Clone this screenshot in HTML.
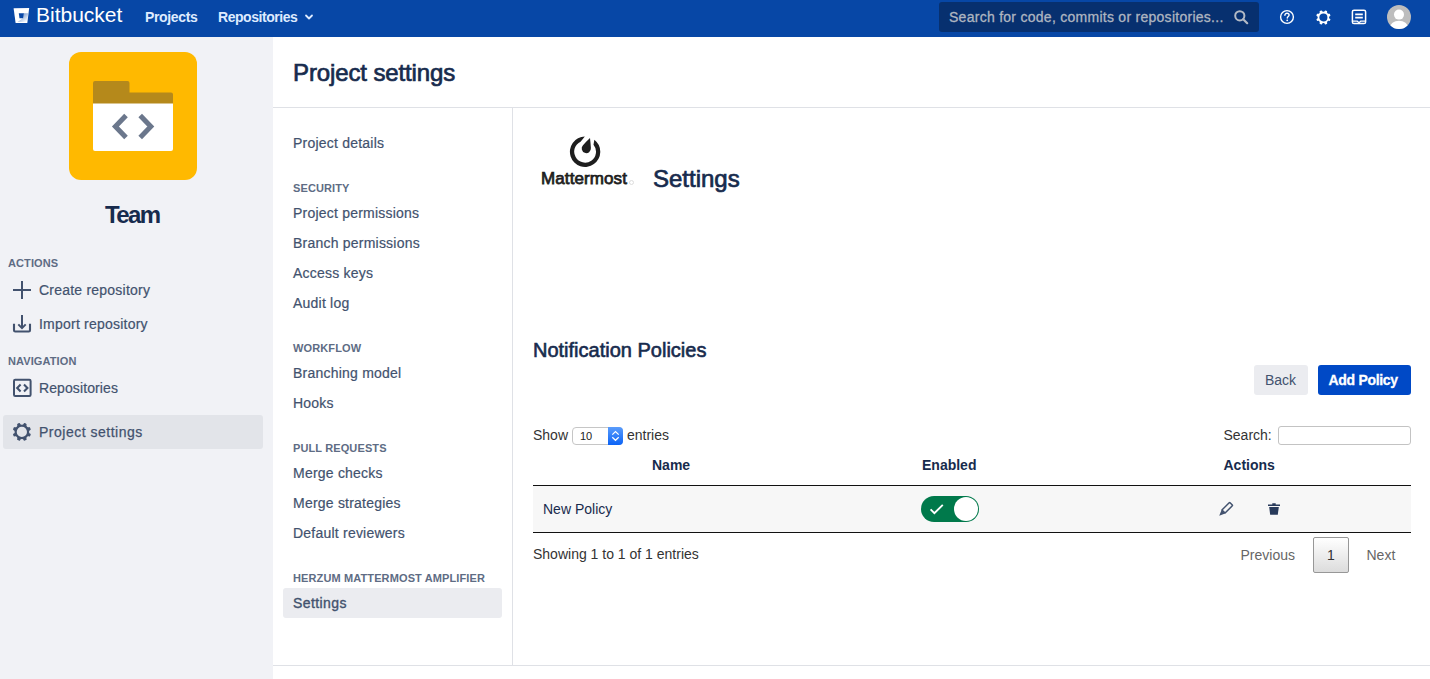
<!DOCTYPE html>
<html><head><meta charset="utf-8">
<style>
*{box-sizing:border-box;margin:0;padding:0}
html,body{width:1430px;height:679px;overflow:hidden;background:#fff;font-family:"Liberation Sans",sans-serif;}
.a{position:absolute}
.t{position:absolute;white-space:nowrap;line-height:1}
#hdr{left:0;top:0;width:1430px;height:37px;background:#0747A6}
#side{left:0;top:37px;width:273px;height:642px;background:#F1F2F6}
.nav-h{font-size:11px;font-weight:700;color:#5E6C84;letter-spacing:0.1px}
.nav-i{font-size:14px;color:#42526E;-webkit-text-stroke:0.2px #42526E}
.sn{font-size:14px;color:#42526E;left:293px;-webkit-text-stroke:0.2px #42526E}
.sh{font-size:11px;font-weight:700;color:#5E6C84;left:293px;letter-spacing:0.12px}
.dt{font-size:14px;color:#333}
.th{font-size:14px;font-weight:700;color:#172B4D}
</style></head><body>
<!-- header -->
<div id="hdr" class="a"></div>
<svg class="a" style="left:13px;top:7px" width="18" height="18" viewBox="0 0 18 18">
  <defs><linearGradient id="bg1" x1="0.2" y1="0.1" x2="0.9" y2="0.9"><stop offset="0" stop-color="#0747A6" stop-opacity="0.6"/><stop offset="1" stop-color="#0747A6" stop-opacity="0"/></linearGradient></defs>
  <path d="M0.6,1.3 L16.2,1.0 L14.3,16 L2.6,16 Z" fill="#fff"/>
  <path d="M10.3,6.3 L15.2,6.3 L14.1,15 L4.5,15 L9.8,11.2 Z" fill="url(#bg1)"/>
  <path d="M5.8,6.3 L10.8,6.3 L10.1,11.2 L6.5,11.2 Z" fill="#0747A6"/>
</svg>
<div class="t" style="left:36px;top:4px;font-size:21px;color:#fff;">Bitbucket</div>
<div class="t" style="left:145px;top:10.2px;font-size:14px;font-weight:700;color:#DEEBFF;letter-spacing:-0.35px">Projects</div>
<div class="t" style="left:218px;top:10.2px;font-size:14px;font-weight:700;color:#DEEBFF;letter-spacing:-0.45px">Repositories</div>
<svg class="a" style="left:303px;top:11px" width="12" height="12" viewBox="0 0 12 12"><path d="M3,4.5 L6,7.5 L9,4.5" stroke="#DEEBFF" stroke-width="1.8" fill="none" stroke-linecap="round" stroke-linejoin="round"/></svg>
<div class="a" style="left:939px;top:2px;width:320px;height:30px;background:#07306F;border-radius:3px"></div>
<div class="t" style="left:949px;top:10.2px;font-size:14px;color:#B3BAC5;letter-spacing:0.27px;-webkit-text-stroke:0.3px #A5ADBA">Search for code, commits or repositories...</div>
<svg class="a" style="left:1233px;top:9px" width="16" height="16" viewBox="0 0 16 16"><circle cx="6.8" cy="6.8" r="4.6" stroke="#B3BAC5" stroke-width="2" fill="none"/><path d="M10.2,10.2 L14.2,14.2" stroke="#B3BAC5" stroke-width="2.2" stroke-linecap="round"/></svg>
<svg class="a" style="left:1279px;top:9px" width="16" height="16" viewBox="0 0 16 16"><circle cx="8" cy="8" r="6.4" stroke="#fff" stroke-width="1.4" fill="none"/><path d="M5.9,6.3 C5.9,4.9 7,4.2 8,4.2 C9.2,4.2 10.1,5 10.1,6.1 C10.1,7.5 8.3,7.6 8.3,9.1" stroke="#fff" stroke-width="1.4" fill="none" stroke-linecap="round"/><circle cx="8.2" cy="11.3" r="0.9" fill="#fff"/></svg>
<svg class="a" style="left:1313.6px;top:7.6px" width="19.3" height="19.3" viewBox="0 0 24 24"><path fill="#fff" d="M11.701 16.7a5.002 5.002 0 1 1 0-10.003 5.002 5.002 0 0 1 0 10.004m8.368-3.117a1.995 1.995 0 0 1-1.346-1.885c0-.876.563-1.613 1.345-1.885a.48.48 0 0 0 .315-.574 8.947 8.947 0 0 0-.836-1.993.477.477 0 0 0-.598-.195 2.04 2.04 0 0 1-1.29.08 1.988 1.988 0 0 1-1.404-1.395 2.04 2.04 0 0 1 .076-1.297.478.478 0 0 0-.196-.6 8.98 8.98 0 0 0-1.975-.826.479.479 0 0 0-.574.314 1.995 1.995 0 0 1-1.885 1.346 1.994 1.994 0 0 1-1.884-1.345.482.482 0 0 0-.575-.315c-.708.2-1.379.485-2.004.842a.47.47 0 0 0-.198.582A2.002 2.002 0 0 1 4.445 7.06a.478.478 0 0 0-.595.196 8.946 8.946 0 0 0-.833 1.994.48.48 0 0 0 .308.572 1.995 1.995 0 0 1 1.323 1.877c0 .867-.552 1.599-1.324 1.877a.479.479 0 0 0-.308.57 8.99 8.99 0 0 0 .723 1.79.477.477 0 0 0 .624.194c.595-.273 1.343-.264 2.104.238.117.077.225.185.302.3.527.8.512 1.58.198 2.188a.473.473 0 0 0 .168.628 8.946 8.946 0 0 0 2.11.897.474.474 0 0 0 .57-.313 1.995 1.995 0 0 1 1.886-1.353c.878 0 1.618.567 1.887 1.353a.475.475 0 0 0 .57.313 8.964 8.964 0 0 0 2.084-.883.473.473 0 0 0 .167-.631c-.318-.608-.337-1.393.191-2.195.077-.116.185-.225.302-.302.772-.511 1.527-.513 2.125-.23a.477.477 0 0 0 .628-.19 8.925 8.925 0 0 0 .728-1.793.478.478 0 0 0-.314-.573"/></svg>
<svg class="a" style="left:1351px;top:9px" width="16" height="16" viewBox="0 0 16 16"><rect x="1.4" y="1.2" width="13.2" height="13.4" rx="1.6" stroke="#fff" stroke-width="1.5" fill="none"/><path d="M4.2,5.4 H11.8 M4.2,8.6 H11.8" stroke="#fff" stroke-width="1.7"/><path d="M1.5,12.2 H6.3 L8,13.6 L9.7,12.2 H14.5" stroke="#fff" stroke-width="1.2" fill="none"/></svg>
<svg class="a" style="left:1387px;top:5px" width="24" height="24" viewBox="0 0 24 24"><defs><clipPath id="avc"><circle cx="12" cy="12" r="12"/></clipPath></defs><circle cx="12" cy="12" r="12" fill="#BDBDBD"/><g clip-path="url(#avc)"><circle cx="12" cy="9.6" r="5" fill="#fff"/><path d="M2.5,24 C3,18.5 7,15.8 12,15.8 C17,15.8 21,18.5 21.5,24 Z" fill="#fff"/></g></svg>

<!-- left sidebar -->
<div id="side" class="a"></div>
<div class="a" style="left:69px;top:52px;width:128px;height:128px;background:#FFB900;border-radius:12px"></div>
<svg class="a" style="left:93px;top:80px" width="81" height="72" viewBox="0 0 81 72">
  <path d="M0,3 Q0,1 2,1 L34.5,1 Q36.5,1 36.5,3 L36.5,12.6 L78,12.6 Q80,12.6 80,14.6 L80,24 L0,24 Z" fill="#B5891B"/>
  <path d="M0,23.4 L80,23.4 L80,69 Q80,71 78,71 L2,71 Q0,71 0,69 Z" fill="#fff"/>
  <path d="M33,35.5 L22.4,46.5 L33,57.5" stroke="#6B778C" stroke-width="5" fill="none" stroke-linejoin="miter"/>
  <path d="M47.2,35.5 L57.8,46.5 L47.2,57.5" stroke="#6B778C" stroke-width="5" fill="none" stroke-linejoin="miter"/>
</svg>
<div class="t" style="left:105px;top:202.8px;font-size:24px;font-weight:700;color:#172B4D;letter-spacing:-1.6px">Team</div>

<div class="t nav-h" style="left:8px;top:257.7px">ACTIONS</div>
<svg class="a" style="left:12px;top:280px" width="20" height="20" viewBox="0 0 20 20"><path d="M10,1 V19 M1,10 H19" stroke="#42526E" stroke-width="2"/></svg>
<div class="t nav-i" style="left:39px;top:282.5px;letter-spacing:0.22px">Create repository</div>
<svg class="a" style="left:12px;top:314px" width="20" height="20" viewBox="0 0 20 20"><path d="M10,1 V14 M6.3,10.4 L10,14.1 L13.7,10.4" stroke="#42526E" stroke-width="2" fill="none"/><path d="M2,9.8 V16.3 Q2,17.5 3.2,17.5 H16.8 Q18,17.5 18,16.3 V9.8" stroke="#42526E" stroke-width="2.1" fill="none"/></svg>
<div class="t nav-i" style="left:39px;top:316.7px;letter-spacing:0.22px">Import repository</div>

<div class="t nav-h" style="left:8px;top:355.9px">NAVIGATION</div>
<svg class="a" style="left:12px;top:378px" width="20" height="20" viewBox="0 0 20 20"><rect x="2" y="1.8" width="16.6" height="16.2" rx="1.2" stroke="#42526E" stroke-width="2" fill="none"/><path d="M8.6,6.6 L5.2,10 L8.6,13.4 M12,6.6 L15.4,10 L12,13.4" stroke="#42526E" stroke-width="2.1" fill="none"/></svg>
<div class="t nav-i" style="left:39px;top:381.2px;letter-spacing:0.1px">Repositories</div>

<div class="a" style="left:3px;top:415px;width:260px;height:34px;background:#E2E4E9;border-radius:3px"></div>
<svg class="a" style="left:9.75px;top:419.6px" width="24.4" height="24.4" viewBox="0 0 24 24"><path fill="#42526E" d="M11.701 16.7a5.002 5.002 0 1 1 0-10.003 5.002 5.002 0 0 1 0 10.004m8.368-3.117a1.995 1.995 0 0 1-1.346-1.885c0-.876.563-1.613 1.345-1.885a.48.48 0 0 0 .315-.574 8.947 8.947 0 0 0-.836-1.993.477.477 0 0 0-.598-.195 2.04 2.04 0 0 1-1.29.08 1.988 1.988 0 0 1-1.404-1.395 2.04 2.04 0 0 1 .076-1.297.478.478 0 0 0-.196-.6 8.98 8.98 0 0 0-1.975-.826.479.479 0 0 0-.574.314 1.995 1.995 0 0 1-1.885 1.346 1.994 1.994 0 0 1-1.884-1.345.482.482 0 0 0-.575-.315c-.708.2-1.379.485-2.004.842a.47.47 0 0 0-.198.582A2.002 2.002 0 0 1 4.445 7.06a.478.478 0 0 0-.595.196 8.946 8.946 0 0 0-.833 1.994.48.48 0 0 0 .308.572 1.995 1.995 0 0 1 1.323 1.877c0 .867-.552 1.599-1.324 1.877a.479.479 0 0 0-.308.57 8.99 8.99 0 0 0 .723 1.79.477.477 0 0 0 .624.194c.595-.273 1.343-.264 2.104.238.117.077.225.185.302.3.527.8.512 1.58.198 2.188a.473.473 0 0 0 .168.628 8.946 8.946 0 0 0 2.11.897.474.474 0 0 0 .57-.313 1.995 1.995 0 0 1 1.886-1.353c.878 0 1.618.567 1.887 1.353a.475.475 0 0 0 .57.313 8.964 8.964 0 0 0 2.084-.883.473.473 0 0 0 .167-.631c-.318-.608-.337-1.393.191-2.195.077-.116.185-.225.302-.302.772-.511 1.527-.513 2.125-.23a.477.477 0 0 0 .628-.19 8.925 8.925 0 0 0 .728-1.793.478.478 0 0 0-.314-.573"/></svg>
<div class="t nav-i" style="left:39px;top:425.2px;letter-spacing:0.5px;-webkit-text-stroke:0.25px #42526E">Project settings</div>

<!-- main -->
<div class="t" style="left:293px;top:60.5px;font-size:24px;color:#172B4D;letter-spacing:-0.12px;-webkit-text-stroke:0.7px #172B4D">Project settings</div>
<div class="a" style="left:273px;top:107px;width:1157px;height:1px;background:#DFE1E6"></div>
<div class="a" style="left:512px;top:108px;width:1px;height:557px;background:#DFE1E6"></div>
<div class="a" style="left:273px;top:665px;width:1157px;height:1px;background:#DFE1E6"></div>

<div class="t sn" style="top:136.2px;letter-spacing:0.22px">Project details</div>
<div class="t sh" style="top:182.7px">SECURITY</div>
<div class="t sn" style="top:206.2px;letter-spacing:0.22px">Project permissions</div>
<div class="t sn" style="top:236.2px;letter-spacing:0.22px">Branch permissions</div>
<div class="t sn" style="top:266.2px;letter-spacing:0.22px">Access keys</div>
<div class="t sn" style="top:296.2px;letter-spacing:0.22px">Audit log</div>
<div class="t sh" style="top:342.7px">WORKFLOW</div>
<div class="t sn" style="top:366.2px;letter-spacing:0.22px">Branching model</div>
<div class="t sn" style="top:396.2px;letter-spacing:0.22px">Hooks</div>
<div class="t sh" style="top:442.7px">PULL REQUESTS</div>
<div class="t sn" style="top:466.2px;letter-spacing:0.22px">Merge checks</div>
<div class="t sn" style="top:496.2px;letter-spacing:0.22px">Merge strategies</div>
<div class="t sn" style="top:526.2px;letter-spacing:0.22px">Default reviewers</div>
<div class="t sh" style="top:572.7px">HERZUM MATTERMOST AMPLIFIER</div>
<div class="a" style="left:283px;top:588px;width:219px;height:30px;background:#EBECF0;border-radius:3px"></div>
<div class="t sn" style="top:596.2px;letter-spacing:0.4px;-webkit-text-stroke:0.35px #42526E">Settings</div>

<!-- content -->
<svg class="a" style="left:568px;top:135px" width="34" height="34" viewBox="0 0 34 34">
  <path d="M16.84,1.5 A15.2,15.2 0 1 0 26.35,4.64 L25.49,9.74 A10.9,10.9 0 1 1 12.58,6.78 Z" fill="#1E1E1E"/>
  <path d="M22,3 Q22.6,8 22.88,13.1 A4.6,4.6 0 1 1 14.98,10.32 Q18.2,6.5 22,3 Z" fill="#1E1E1E"/>
</svg>
<div class="t" style="left:541px;top:170.3px;font-size:17px;color:#1E1E1E;letter-spacing:0.1px;-webkit-text-stroke:0.75px #1E1E1E">Mattermost</div>
<div class="a" style="left:629px;top:180px;width:5px;height:5px;border:1px solid #DDD;border-radius:50%"></div>
<div class="t" style="left:653px;top:166.6px;font-size:24px;color:#172B4D;-webkit-text-stroke:0.7px #172B4D">Settings</div>

<div class="t" style="left:533px;top:340px;font-size:20px;color:#172B4D;-webkit-text-stroke:0.6px #172B4D">Notification Policies</div>
<div class="a" style="left:1254px;top:365px;width:54px;height:30px;background:#EBECF0;border-radius:3px"></div>
<div class="t" style="left:1265px;top:373.2px;font-size:14px;color:#42526E">Back</div>
<div class="a" style="left:1318px;top:365px;width:93px;height:30px;background:#0049C6;border-radius:3px"></div>
<div class="t" style="left:1328.5px;top:373.2px;font-size:14px;font-weight:700;color:#fff;letter-spacing:-0.3px;-webkit-text-stroke:0.3px #fff">Add Policy</div>

<div class="t dt" style="left:533px;top:427.7px">Show</div>
<div class="a" style="left:572px;top:427px;width:51px;height:18px;border:1px solid #C6C6C6;border-radius:4px;background:#fff"></div>
<div class="a" style="left:608px;top:427px;width:15px;height:18px;background:linear-gradient(#5A9CFB,#0B63F6);border-radius:0 4px 4px 0"></div>
<svg class="a" style="left:608px;top:427px" width="15" height="18" viewBox="0 0 15 18"><path d="M4.3,7.6 L7.5,4.5 L10.7,7.6 M4.3,10.2 L7.5,13.3 L10.7,10.2" stroke="#fff" stroke-width="1.2" fill="none"/></svg>
<div class="t" style="left:580px;top:430.5px;font-size:11px;color:#222">10</div>
<div class="t dt" style="left:627px;top:427.7px">entries</div>

<div class="t dt" style="left:1223.5px;top:428.2px">Search:</div>
<div class="a" style="left:1278px;top:426px;width:133px;height:19px;border:1px solid #C3C3C3;border-radius:3px;background:#fff"></div>

<div class="t th" style="left:652px;top:458.2px">Name</div>
<div class="t th" style="left:922px;top:458.2px">Enabled</div>
<div class="t th" style="left:1223.5px;top:458.2px">Actions</div>
<div class="a" style="left:533px;top:485px;width:878px;height:1px;background:#111"></div>
<div class="a" style="left:533px;top:486px;width:878px;height:46px;background:#F7F7F7"></div>
<div class="a" style="left:533px;top:532px;width:878px;height:1px;background:#111"></div>
<div class="t" style="left:543px;top:502.2px;font-size:14px;color:#172B4D">New Policy</div>

<div class="a" style="left:921px;top:496px;width:58px;height:26px;background:#00794B;border-radius:13px"></div>
<div class="a" style="left:954px;top:497px;width:24px;height:24px;background:#fff;border-radius:50%"></div>
<svg class="a" style="left:928px;top:501px" width="18" height="16" viewBox="0 0 18 16"><path d="M2.6,8.4 L6.4,12.1 L14.8,3.9" stroke="#fff" stroke-width="1.9" fill="none"/></svg>

<svg class="a" style="left:1217px;top:500px" width="18" height="18" viewBox="0 0 18 18"><path d="M4.94,9.94 L12.2,2.68 Q12.64,2.24 13.08,2.68 L15.32,4.92 Q15.76,5.36 15.32,5.8 L8.06,13.06 Z" stroke="#42526E" stroke-width="1.5" fill="none" stroke-linejoin="round"/><path d="M4.6,9.9 L8.1,13.4 L2.2,15.8 Z" fill="#42526E"/></svg>
<svg class="a" style="left:1266px;top:501px" width="16" height="16" viewBox="0 0 16 16"><path d="M2,3.6 H14 V5.1 H2 Z M6.3,2.2 H9.7 V3.6 H6.3 Z" fill="#283A5B"/><path d="M3.2,6 H12.8 L11.8,13.8 H4.2 Z" fill="#283A5B"/></svg>

<div class="t dt" style="left:533px;top:546.7px">Showing 1 to 1 of 1 entries</div>
<div class="t" style="left:1240.5px;top:547.7px;font-size:14px;color:#666">Previous</div>
<div class="a" style="left:1313px;top:537px;width:36px;height:36px;border:1px solid #979797;border-radius:2px;background:linear-gradient(#fff,#DCDCDC)"></div>
<div class="t" style="left:1327px;top:547.7px;font-size:14px;color:#333">1</div>
<div class="t" style="left:1366.5px;top:547.7px;font-size:14px;color:#666">Next</div>
</body></html>
